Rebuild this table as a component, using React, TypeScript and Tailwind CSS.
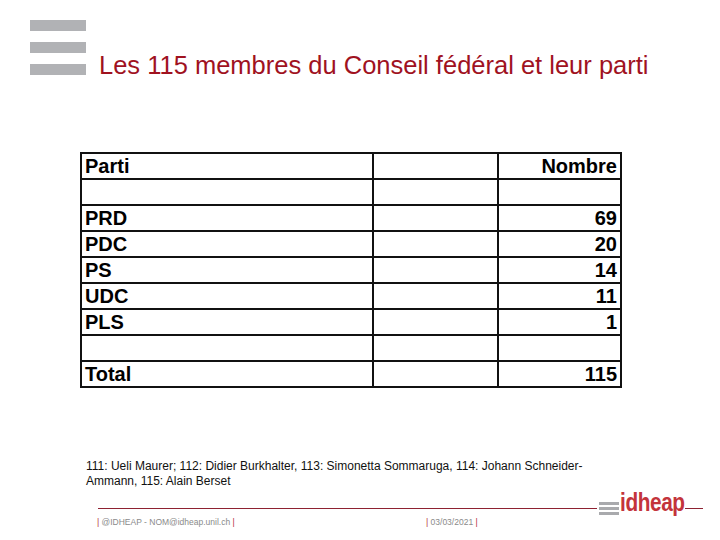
const rows: { parti: string; nombre: string }[] = [
  { parti: "Parti", nombre: "Nombre" },
  { parti: "", nombre: "" },
  { parti: "PRD", nombre: "69" },
  { parti: "PDC", nombre: "20" },
  { parti: "PS", nombre: "14" },
  { parti: "UDC", nombre: "11" },
  { parti: "PLS", nombre: "1" },
  { parti: "", nombre: "" },
  { parti: "Total", nombre: "115" },
];

function Bars() {
  return (
    <div className="flex flex-col gap-[11px] pt-[20px]">
      <div className="h-[11px] w-[56px] bg-[#b1b2b5]" />
      <div className="h-[11px] w-[56px] bg-[#b1b2b5]" />
      <div className="h-[11px] w-[56px] bg-[#b1b2b5]" />
    </div>
  );
}

function IdheapLogo() {
  return (
    <div className="flex items-end bg-white pl-[2px]">
      <div className="mb-[3px] mr-[1px] flex flex-col gap-[2px]">
        <div className="h-[3px] w-[20px] bg-[#a9aaad]" />
        <div className="h-[3px] w-[20px] bg-[#a9aaad]" />
        <div className="h-[3px] w-[20px] bg-[#a9aaad]" />
      </div>
      <div className="w-[65px] overflow-visible">
        <span className="inline-block origin-left scale-x-[0.8] text-[26px] font-bold leading-[22px] tracking-[-0.5px] text-[#c3343b]">
          idheap
        </span>
      </div>
    </div>
  );
}

export default function App() {
  return (
    <div className="h-[540px] w-[720px] overflow-hidden bg-white font-['Liberation_Sans',Arial,sans-serif]">
      {/* Title */}
      <div className="flex items-start pl-[30px]">
        <Bars />
        <h1 className="ml-[13px] mt-[53px] text-[25.5px] leading-none font-normal text-[#a0121f]">
          Les 115 membres du Conseil fédéral et leur parti
        </h1>
      </div>

      {/* Table */}
      <div className="ml-[80px] mt-[73px]">
        <table className="border-collapse border-2 border-[#111]">
          <tbody>
            {rows.map((r, i) => (
              <tr key={i} className="h-[26px]">
                <td className="w-[292px] border-2 border-[#111] px-[3px] py-0 text-[20px] font-bold leading-none text-black">
                  {r.parti}
                </td>
                <td className="w-[125px] border-2 border-[#111]" />
                <td className="w-[123px] border-2 border-[#111] px-[3px] py-0 text-right text-[20px] font-bold leading-none text-black">
                  {r.nombre}
                </td>
              </tr>
            ))}
          </tbody>
        </table>
      </div>

      {/* Footnote */}
      <p className="ml-[86px] mt-[71px] w-[520px] text-[12px] leading-[15px] text-[#111]">
        111: Ueli Maurer; 112: Didier Burkhalter, 113: Simonetta Sommaruga, 114: Johann Schneider-Ammann, 115: Alain Berset
      </p>

      {/* Footer */}
      <div className="ml-[98px] mt-[2px] flex w-[605px] items-end">
        <div className="mb-[9px] h-px flex-1 bg-[#8e2232]" />
        <IdheapLogo />
        <div className="mb-[9px] h-px w-[18px] bg-[#8e2232]" />
      </div>
      <div className="ml-[97px] flex text-[8.5px] leading-none text-[#8a8a8a]">
        <span className="w-[329px]">
          <span className="text-[#b0303a]">|</span> @IDHEAP - NOM@idheap.unil.ch <span className="text-[#b0303a]">|</span>
        </span>
        <span>
          <span className="text-[#b0303a]">|</span> 03/03/2021 <span className="text-[#b0303a]">|</span>
        </span>
      </div>
    </div>
  );
}
